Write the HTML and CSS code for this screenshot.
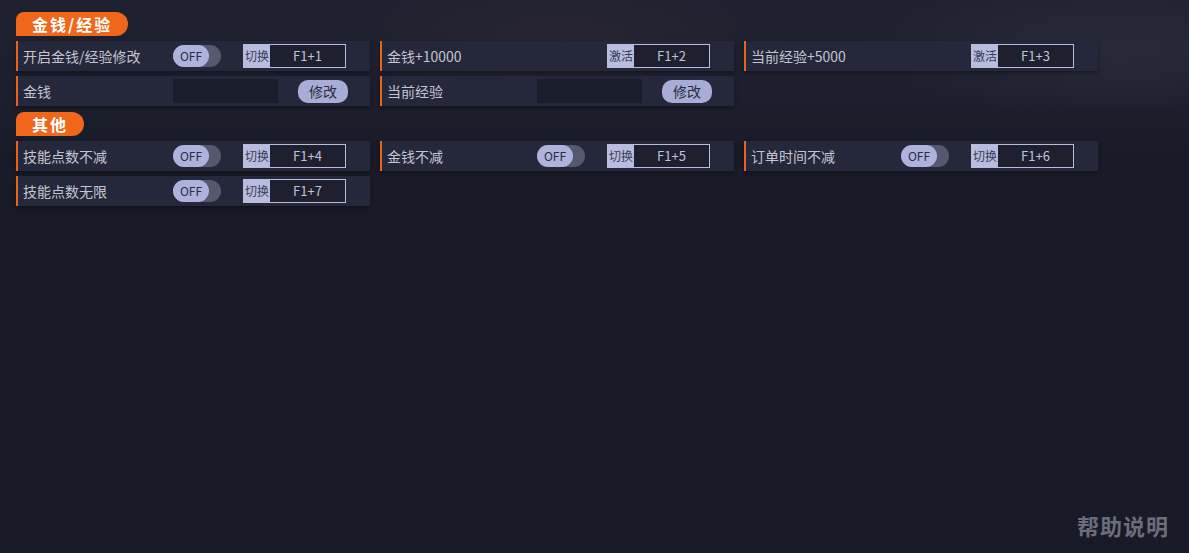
FILE: index.html
```html
<!DOCTYPE html>
<html lang="zh-CN">
<head>
    <meta charset="UTF-8">
    <meta name="viewport" content="width=device-width, initial-scale=1.0">
    <title>修改器</title>
    <link rel="stylesheet" href="styles.css">
</head>
<body>

<div class="page">
    <div class="group">
        <div class="group-title">金钱/经验</div>
        <div class="grid">
            <div class="item">
                <span class="label">开启金钱/经验修改</span>
                <div class="switch"><span class="knob">OFF</span></div>
                <div class="hotkey"><span class="hk-tag">切换</span><span class="hk-key">F1+1</span></div>
            </div>
            <div class="item">
                <span class="label">金钱+10000</span>
                <div class="hotkey"><span class="hk-tag">激活</span><span class="hk-key">F1+2</span></div>
            </div>
            <div class="item">
                <span class="label">当前经验+5000</span>
                <div class="hotkey"><span class="hk-tag">激活</span><span class="hk-key">F1+3</span></div>
            </div>
            <div class="item">
                <span class="label">金钱</span>
                <input class="value-input" type="text">
                <button class="btn">修改</button>
            </div>
            <div class="item">
                <span class="label">当前经验</span>
                <input class="value-input" type="text">
                <button class="btn">修改</button>
            </div>
        </div>
    </div>

    <div class="group">
        <div class="group-title">其他</div>
        <div class="grid">
            <div class="item">
                <span class="label">技能点数不减</span>
                <div class="switch"><span class="knob">OFF</span></div>
                <div class="hotkey"><span class="hk-tag">切换</span><span class="hk-key">F1+4</span></div>
            </div>
            <div class="item">
                <span class="label">金钱不减</span>
                <div class="switch"><span class="knob">OFF</span></div>
                <div class="hotkey"><span class="hk-tag">切换</span><span class="hk-key">F1+5</span></div>
            </div>
            <div class="item">
                <span class="label">订单时间不减</span>
                <div class="switch"><span class="knob">OFF</span></div>
                <div class="hotkey"><span class="hk-tag">切换</span><span class="hk-key">F1+6</span></div>
            </div>
            <div class="item">
                <span class="label">技能点数无限</span>
                <div class="switch"><span class="knob">OFF</span></div>
                <div class="hotkey"><span class="hk-tag">切换</span><span class="hk-key">F1+7</span></div>
            </div>
        </div>
    </div>

    <div class="help">帮助说明</div>
</div>

</body>
</html>
```

FILE: styles.css
```css
body {
    margin: 0;
    padding: 0;
    font-family: "Noto Sans CJK SC", "Noto Sans", sans-serif;
    color: #c4c5d2;
    background-color: #181a27;
    background-image:
        radial-gradient(ellipse 220px 60px at 560px 40px, rgba(60, 48, 52, 0.3), transparent),
        radial-gradient(ellipse 260px 70px at 1120px 50px, rgba(70, 74, 90, 0.25), transparent),
        linear-gradient(to bottom, #1f2130 0, #1d1f2e 90px, #191b28 150px, #181a27 100%);
    height: 100vh;
    overflow: hidden;
}
.page {
    display: flex;
    flex-direction: column;
    height: 100%;
    box-sizing: border-box;
    padding: 12px 0 0 16px;
}
.group {
    margin-bottom: 6px;
}
.group-title {
    display: inline-block;
    height: 24px;
    line-height: 24px;
    padding: 0 16px 0 16px;
    background-color: #f0661b;
    color: #fff;
    font-size: 16px;
    font-weight: bold;
    letter-spacing: 2px;
    border-radius: 8px 12px 12px 0;
    margin-bottom: 5px;
}
.grid {
    display: grid;
    grid-template-columns: repeat(3, 354px);
    column-gap: 10px;
    row-gap: 5px;
}
.item {
    display: flex;
    align-items: center;
    height: 30px;
    box-sizing: border-box;
    background-color: #25283a;
    border-left: 2px solid #e8641c;
    padding-left: 5px;
    box-shadow: 0 2px 4px rgba(0, 0, 0, 0.35);
}
.label {
    width: 150px;
    font-size: 14px;
    white-space: nowrap;
}
.switch {
    width: 48px;
    height: 22px;
    border-radius: 11px;
    background-color: #55586f;
}
.knob {
    display: block;
    width: 36px;
    height: 22px;
    line-height: 22px;
    border-radius: 11px;
    background-color: #aeb2dc;
    color: #2a2d45;
    font-size: 12px;
    text-align: center;
}
.hotkey {
    display: flex;
    margin-left: auto;
    margin-right: 24px;
    width: 103px;
    height: 24px;
    box-sizing: border-box;
    border: 1px solid #b8bcdf;
    font-size: 12px;
}
.hk-tag {
    width: 26px;
    background-color: #b8bcdf;
    color: #3a3d55;
    line-height: 22px;
    text-align: center;
    white-space: nowrap;
    overflow: hidden;
}
.hk-key {
    flex: 1;
    background-color: #1e2030;
    color: #c0c2d8;
    font-size: 13px;
    line-height: 22px;
    text-align: center;
}
.value-input {
    width: 105px;
    height: 24px;
    box-sizing: border-box;
    border: none;
    background-color: #1a1d2b;
    outline: none;
}
.btn {
    margin-left: 20px;
    width: 50px;
    height: 23px;
    padding: 0;
    border: none;
    border-radius: 10px;
    background-color: #a9acd6;
    color: #2a2c40;
    font-family: inherit;
    font-size: 14px;
    cursor: pointer;
}
.help {
    margin-top: auto;
    align-self: flex-end;
    margin-right: 20px;
    margin-bottom: 12px;
    font-size: 22px;
    font-weight: bold;
    color: #6b6d7c;
    letter-spacing: 1px;
}
```
